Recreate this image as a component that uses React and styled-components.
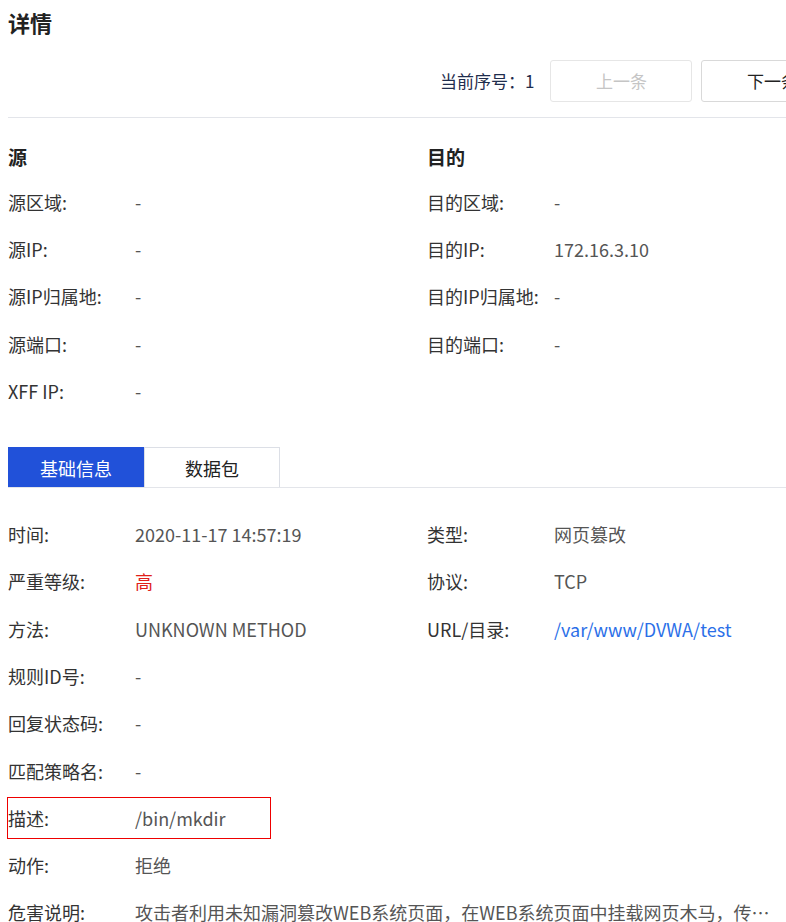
import React from "react";
import styled, { createGlobalStyle } from "styled-components";

const G = createGlobalStyle`
  body { margin: 0; overflow: hidden; background: #fff; font-family: "Noto Sans CJK SC", sans-serif; }
`;
const Page = styled.div`width: 778px; padding: 0 0 0 8px; overflow: hidden;`;
const Title = styled.h1`margin: 0; height: 44px; font-size: 22px; font-weight: 700; color: #222; line-height: 44px;`;
const Toolbar = styled.div`
  display: flex; align-items: center; gap: 9px; padding-left: 432px; height: 73px;
  border-bottom: 1px solid #e3e5ea;
`;
const Seq = styled.span`font-size: 17px; color: #1f2d4d; margin-right: 7px; white-space: nowrap; flex-shrink: 0;`;
const Btn = styled.button`
  width: 142px; height: 42px; border: 1px solid ${p => p.$disabled ? "#e6e6e6" : "#d9d9d9"};
  border-radius: 3px; background: #fff; font-size: 17px; font-family: inherit;
  color: ${p => p.$disabled ? "#c5c5c5" : "#222"}; flex-shrink: 0;
`;
const Cols = styled.div`display: grid; grid-template-columns: 419px 1fr; margin-top: 24px;`;
const Head = styled.div`font-size: 19px; font-weight: 700; color: #222; height: 36px; line-height: 30px;`;
const Grid = styled.div`display: grid; grid-template-columns: 419px 1fr;`;
const Row = styled.div`
  display: grid; grid-template-columns: 127px 1fr; height: 47.3px; align-items: center;
  font-size: 18px; color: #333; white-space: nowrap; min-width: 0;
  ${p => p.$wide && "width: 770px;"}
  ${p => p.$boxed && "outline: 1.5px solid #e00; width: 262px; height: 40px; margin: 3.5px 0 3.6px; box-sizing: border-box;"}
`;
const Val = styled.span`color: ${p => p.$c || "#555"}; overflow: hidden; text-overflow: ellipsis;`;
const Tabs = styled.div`display: flex; border-bottom: 1px solid #e3e5ea; margin: 33px 0 22px;`;
const Tab = styled.div`
  width: 134px; height: 39px; display: flex; align-items: center; justify-content: center; font-size: 18px;
  background: ${p => p.$on ? "#2151d9" : "#fff"}; color: ${p => p.$on ? "#fff" : "#222"};
  border: 1px solid ${p => p.$on ? "#2151d9" : "#dcdfe6"}; border-bottom: none;
`;

const R = ({ l, v, c, boxed, wide }) => (<Row $boxed={boxed} $wide={wide}><span>{l}</span><Val $c={c}>{v}</Val></Row>);

export default function App() {
  return (<Page><G />
    <Title>详情</Title>
    <Toolbar><Seq>当前序号：1</Seq><Btn $disabled>上一条</Btn><Btn>下一条</Btn></Toolbar>
    <Cols>
      <div><Head>源</Head>
        <R l="源区域:" v="-" /><R l="源IP:" v="-" /><R l="源IP归属地:" v="-" /><R l="源端口:" v="-" /><R l="XFF IP:" v="-" />
      </div>
      <div><Head>目的</Head>
        <R l="目的区域:" v="-" /><R l="目的IP:" v="172.16.3.10" /><R l="目的IP归属地:" v="-" /><R l="目的端口:" v="-" />
      </div>
    </Cols>
    <Tabs><Tab $on>基础信息</Tab><Tab>数据包</Tab></Tabs>
    <Grid>
      <R l="时间:" v="2020-11-17 14:57:19" /><R l="类型:" v="网页篡改" />
      <R l="严重等级:" v="高" c="#e0201a" /><R l="协议:" v="TCP" />
      <R l="方法:" v="UNKNOWN METHOD" /><R l="URL/目录:" v="/var/www/DVWA/test" c="#2b6fe8" />
    </Grid>
    <R l="规则ID号:" v="-" />
    <R l="回复状态码:" v="-" />
    <R l="匹配策略名:" v="-" />
    <R l="描述:" v="/bin/mkdir" boxed />
    <R l="动作:" v="拒绝" />
    <R wide l="危害说明:" v="攻击者利用未知漏洞篡改WEB系统页面，在WEB系统页面中挂载网页木马，传播非法信息" />
  </Page>);
}
